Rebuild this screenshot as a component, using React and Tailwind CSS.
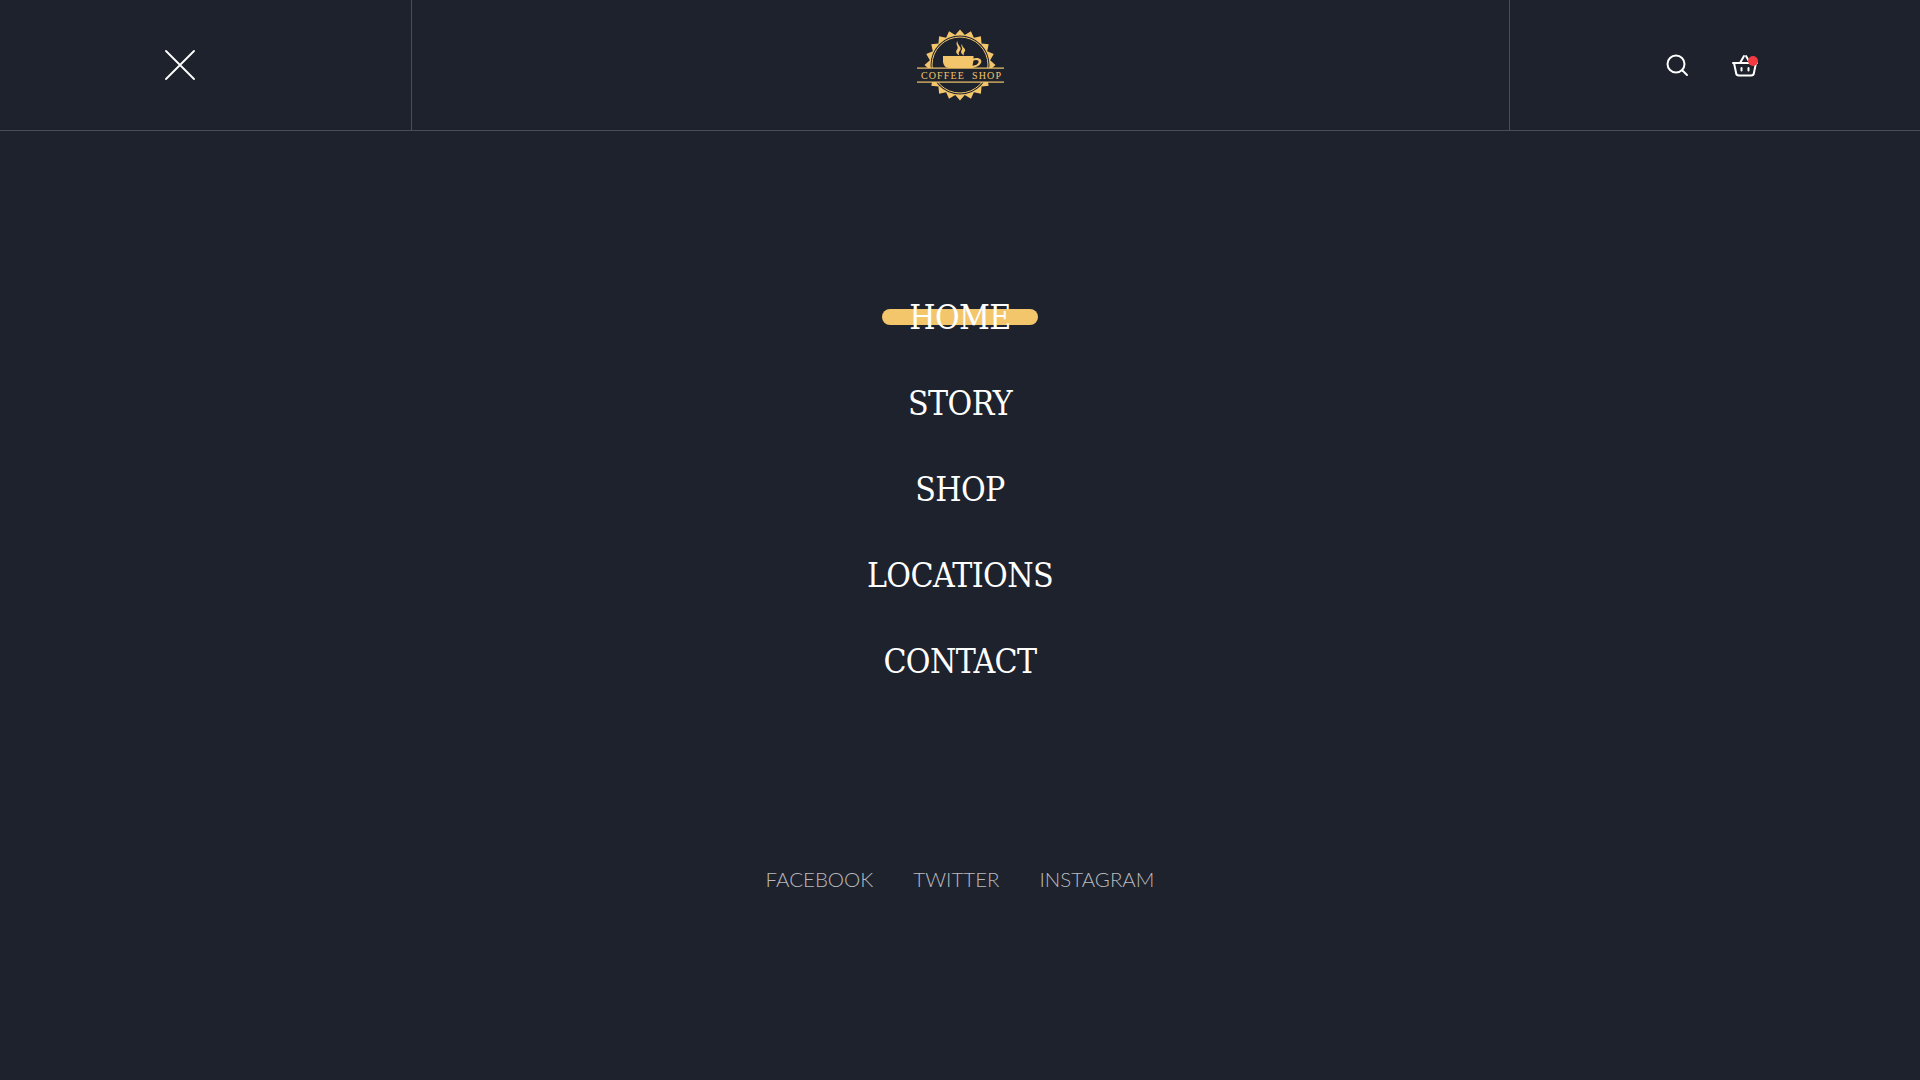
import React from "react";

const links = ["HOME", "STORY", "SHOP", "LOCATIONS", "CONTACT"];
const socials = ["FACEBOOK", "TWITTER", "INSTAGRAM"];

function gearPoints() {
  const pts = [];
  const teeth = 20;
  for (let i = 0; i < teeth * 2; i++) {
    const r = i % 2 === 0 ? 35.5 : 30.5;
    const a = (Math.PI * i) / teeth - Math.PI / 2;
    pts.push(`${(45 + r * Math.cos(a)).toFixed(2)},${(36 + r * Math.sin(a)).toFixed(2)}`);
  }
  return pts.join(" ");
}

function Logo() {
  return (
    <svg className="mr-[1px]" width="90" height="72" viewBox="0 0 90 72" fill="none">
      <polygon points={gearPoints()} fill="#f3c66b" />
      <circle cx="45" cy="36" r="29.500" fill="#1e222d" />
      <circle cx="45" cy="36" r="28" stroke="#f3c66b" strokeWidth="1" />
      {/* steam */}
      <path d="M42.500 12c-3 3.500 2 5.500-.5 8.500-2 2.500 0 5 2.500 6-1.500-2.500-.5-3.500.8-5.500 2-3-3.500-5-2.800-9z" fill="#f3c66b" />
      <path d="M47 15c-2 2.500 1.500 3.500-.3 6-1.500 2-.2 4 2.300 5.500-1-2 .3-3 1-4.500 1.200-2.500-3.200-3.500-3-7z" fill="#f3c66b" />
      {/* cup */}
      <path d="M28 27h30.500v2.500c2-.8 5-.8 7 .8 1.500 1.500 1 4-1 5.800-1.800 1.400-4 2.300-7.500 2.900H34c-3.500 0-5.500-3-6-6z" fill="#f3c66b" />
      <path d="M58.500 31.500c1.800-.7 3.800-.7 4.800.3.800 1 0 2.500-1.300 3.400-1.200.7-2.800 1.200-4.500 1.500z" fill="#1e222d" />
      <rect x="0" y="39" width="90" height="14" fill="#1e222d" />
      <rect x="2" y="38.500" width="87" height="1.200" fill="#f3c66b" />
      <rect x="2" y="52.500" width="87" height="1.200" fill="#f3c66b" />
      <text
        x="6"
        y="50"
        textLength="80"
        fill="#f3c66b"
        fontSize="10"
        fontFamily="'Liberation Serif', serif"
        xmlSpace="preserve"
      >
        COFFEE  SHOP
      </text>
    </svg>
  );
}

function SearchIcon() {
  return (
    <svg width="26" height="26" viewBox="0 0 26 26" fill="none" stroke="#fff" strokeWidth="2" strokeLinecap="round">
      <circle cx="12" cy="12" r="8.500" />
      <path d="M18.500 18.500l4.500 4.500" />
    </svg>
  );
}

function BasketIcon() {
  return (
    <div className="relative h-[26px] w-[28px]">
      <svg width="28" height="26" viewBox="0 0 28 26" fill="none" stroke="#fff" strokeWidth="2" strokeLinecap="round" strokeLinejoin="round">
        <path d="M2 11h24" />
        <path d="M3 11l2 9.500a3 3 0 0 0 3 3h12a3 3 0 0 0 3-3l2-9.500" />
        <path d="M9 11l4-7M19 11l-4-7" />
        <path d="M10.500 16v2.500M17.500 16v2.500" />
      </svg>
      <span className="absolute left-[17px] top-[4px] h-[10px] w-[10px] rounded-full bg-[#f23b40]" />
    </div>
  );
}

export default function App() {
  return (
    <div className="min-h-[1080px] bg-[#1e222d] text-white">
      <header className="flex h-[131px] border-b border-[#4a4d56]">
        <div className="flex w-[412px] items-center border-r border-[#4a4d56] pl-[165px]">
          <svg width="30" height="30" viewBox="0 0 30 30" fill="none" stroke="#fff" strokeWidth="1.800" strokeLinecap="round">
            <path d="M1 1l28 28M29 1L1 29" />
          </svg>
        </div>
        <div className="flex flex-1 items-center justify-center">
          <Logo />
        </div>
        <div className="flex w-[411px] items-center justify-end gap-[41px] border-l border-[#4a4d56] pr-[161px]">
          <SearchIcon />
          <BasketIcon />
        </div>
      </header>

      <main className="flex flex-col items-center pt-[143px]">
        <nav className="flex flex-col items-center font-['DejaVu_Serif_Condensed','DejaVu_Serif',serif] text-[33.500px] tracking-[-0.6px]">
          {links.map((link, i) => (
            <a key={link} className="relative flex h-[86px] items-center justify-center">
              {i === 0 && (
                <span className="absolute left-1/2 top-1/2 h-[16px] w-[156px] -translate-x-1/2 -translate-y-1/2 rounded-full bg-[#f3c66b]" />
              )}
              <span className="relative pt-[2px]">{link}</span>
            </a>
          ))}
        </nav>
        <div className="mt-[163px] flex gap-[40px] font-['Lato',sans-serif] text-[20.500px] font-light leading-[24px] text-[#b8babf]">
          {socials.map((s) => (
            <a key={s}>{s}</a>
          ))}
        </div>
      </main>
    </div>
  );
}
